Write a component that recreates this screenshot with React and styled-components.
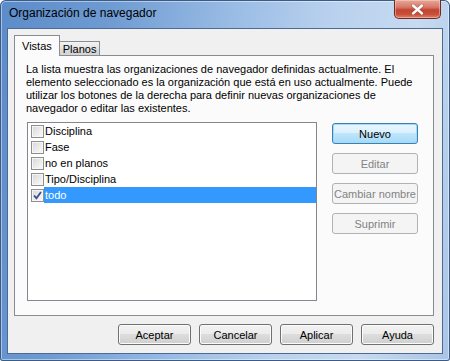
import React from 'react';
import styled, { createGlobalStyle } from 'styled-components';

const GlobalStyle = createGlobalStyle`
  html, body { margin: 0; padding: 0; background: #ffffff; }
  body { font-family: "Liberation Sans", Arial, sans-serif; }
  * { box-sizing: border-box; }
`;

const items = [
  { name: 'Disciplina', checked: false },
  { name: 'Fase', checked: false },
  { name: 'no en planos', checked: false },
  { name: 'Tipo/Disciplina', checked: false },
  { name: 'todo', checked: true, selected: true },
];

const sideButtons = [
  { label: 'Nuevo', variant: 'default' },
  { label: 'Editar', variant: 'disabled' },
  { label: 'Cambiar nombre', variant: 'disabled' },
  { label: 'Suprimir', variant: 'disabled' },
];

const footerButtons = ['Aceptar', 'Cancelar', 'Aplicar', 'Ayuda'];

const CheckMark = () => (
  <svg width="9" height="9" viewBox="0 0 9 9">
    <path d="M1 4.5 L3.4 7.2 L8 1" fill="none" stroke="#3b4f8c" strokeWidth="1.8" />
  </svg>
);

const CloseGlyph = () => (
  <svg width="13" height="11" viewBox="0 0 13 11">
    <path d="M2 1.5 L11 9.5 M11 1.5 L2 9.5" stroke="#5a1d12" strokeWidth="3.6" strokeLinecap="round" opacity="0.35" />
    <path d="M2 1.5 L11 9.5 M11 1.5 L2 9.5" stroke="#ffffff" strokeWidth="2.4" strokeLinecap="round" />
  </svg>
);

const App = () => {
  return (
    <>
      <GlobalStyle />
      <Window>
        <TitleBar>
          <Title>Organización de navegador</Title>
          <CloseButton>
            <CloseGlyph />
          </CloseButton>
        </TitleBar>
        <Client>
          <TabStrip>
            <Tab $active>Vistas</Tab>
            <Tab>Planos</Tab>
          </TabStrip>
          <Panel>
            <Description>
              La lista muestra las organizaciones de navegador definidas actualmente. El<br />
              elemento seleccionado es la organización que está en uso actualmente. Puede<br />
              utilizar los botones de la derecha para definir nuevas organizaciones de<br />
              navegador o editar las existentes.
            </Description>
            <BodyRow>
              <ListBox>
                {items.map((item) => (
                  <ListRow key={item.name}>
                    <Checkbox>{item.checked && <CheckMark />}</Checkbox>
                    <ItemLabel $selected={item.selected}>{item.name}</ItemLabel>
                  </ListRow>
                ))}
              </ListBox>
              <ButtonColumn>
                {sideButtons.map((b) => (
                  <Button key={b.label} $variant={b.variant} $width={86}>
                    {b.label}
                  </Button>
                ))}
              </ButtonColumn>
            </BodyRow>
          </Panel>
          <Footer>
            {footerButtons.map((label) => (
              <Button key={label} $width={73}>
                {label}
              </Button>
            ))}
          </Footer>
        </Client>
      </Window>
    </>
  );
};

export default App;

const Window = styled.div`
  width: 450px;
  height: 361px;
  display: flex;
  flex-direction: column;
  border-radius: 6px 6px 3px 3px;
  background: linear-gradient(100deg, #5b8bc9 0%, #6f9bd2 22%, #98bbe4 45%, #b9d1ee 65%, #c6daf1 82%, #a9c4e6 100%);
  box-shadow: inset 0 0 0 1px #3b5c88, inset 0 0 0 2px rgba(255, 255, 255, 0.45);
  overflow: hidden;
`;

const TitleBar = styled.div`
  height: 28px;
  flex: none;
  display: flex;
  justify-content: space-between;
  align-items: flex-start;
  padding-left: 9px;
`;

const Title = styled.div`
  margin-top: 6px;
  font-size: 12px;
  line-height: 14px;
  color: #000000;
`;

const CloseButton = styled.div`
  width: 47px;
  height: 19px;
  margin-right: 9px;
  display: flex;
  align-items: center;
  justify-content: center;
  border: 1px solid #6e2a1f;
  border-top: none;
  border-radius: 0 0 5px 5px;
  background: linear-gradient(#e6a996 0%, #d8786a 40%, #c24530 55%, #c8503a 80%, #e0846c 100%);
  box-shadow: inset 0 0 0 1px rgba(255, 220, 210, 0.45);
`;

const Client = styled.div`
  flex: 1;
  margin: 0 7px 7px;
  border: 1px solid #4d6a92;
  background: #f0f0f0;
  display: flex;
  flex-direction: column;
  padding: 6px 8px 8px 6px;
`;

const TabStrip = styled.div`
  height: 20px;
  display: flex;
  align-items: flex-end;
  position: relative;
  z-index: 1;
`;

const Tab = styled.div`
  font-size: 11px;
  color: #000000;
  border: 1px solid #898c95;
  border-bottom: none;
  ${({ $active }) =>
    $active
      ? `
    height: 21px;
    margin-bottom: -1px;
    padding: 4px 7px 0;
    background: #fbfbfb;
  `
      : `
    height: 14px;
    padding: 0 3px 0 3px;
    border-left: none;
    line-height: 14px;
    background: linear-gradient(#f3f3f3, #e3e3e3 50%, #dadada 50%, #d4d4d4);
  `}
`;

const Panel = styled.div`
  height: 261px;
  flex: none;
  border: 1px solid #898c95;
  background: #fbfbfb;
  padding: 7px 10px 0 11px;
`;

const Description = styled.p`
  margin: 0;
  font-size: 11px;
  line-height: 13px;
  color: #000000;
  white-space: nowrap;
`;

const BodyRow = styled.div`
  display: flex;
  align-items: flex-start;
  gap: 15px;
  margin-top: 7px;
  margin-left: 1px;
`;

const ListBox = styled.div`
  width: 290px;
  height: 179px;
  border: 1px solid #828790;
  background: #ffffff;
`;

const ListRow = styled.div`
  height: 16px;
  display: flex;
  align-items: center;
  padding-left: 3px;
`;

const Checkbox = styled.span`
  width: 13px;
  height: 13px;
  flex: none;
  display: flex;
  align-items: center;
  justify-content: center;
  border: 1px solid #8e8f8f;
  background: linear-gradient(135deg, #d6d6d6 0%, #eeeeee 60%, #f8f8f8 100%);
  box-shadow: inset 0 0 0 1px #f6f6f6;
`;

const ItemLabel = styled.span`
  flex: 1;
  height: 16px;
  line-height: 16px;
  padding-left: 1px;
  font-size: 11px;
  color: ${({ $selected }) => ($selected ? '#ffffff' : '#000000')};
  background: ${({ $selected }) => ($selected ? '#3399ff' : 'transparent')};
`;

const ButtonColumn = styled.div`
  display: flex;
  flex-direction: column;
  gap: 9px;
  margin-top: 1px;
`;

const Button = styled.div`
  width: ${({ $width }) => $width}px;
  height: 21px;
  display: flex;
  align-items: center;
  justify-content: center;
  font-size: 11px;
  border-radius: 3px;
  ${({ $variant }) =>
    $variant === 'default'
      ? `
    color: #000000;
    border: 1px solid #3c7fb1;
    background: linear-gradient(#eaf6fd 0%, #d9f0fc 50%, #bee6fd 50%, #a7d9f5 100%);
    box-shadow: inset 0 0 0 1px #9fdcf8;
  `
      : $variant === 'disabled'
      ? `
    color: #838383;
    border: 1px solid #adb2b5;
    background: #f4f4f4;
  `
      : `
    color: #000000;
    border: 1px solid #707070;
    background: linear-gradient(#f2f2f2 0%, #ebebeb 50%, #dddddd 50%, #cfcfcf 100%);
    box-shadow: inset 0 0 0 1px #fbfbfb;
  `}
`;

const Footer = styled.div`
  display: flex;
  justify-content: flex-end;
  gap: 8px;
  margin-top: 8px;
`;
